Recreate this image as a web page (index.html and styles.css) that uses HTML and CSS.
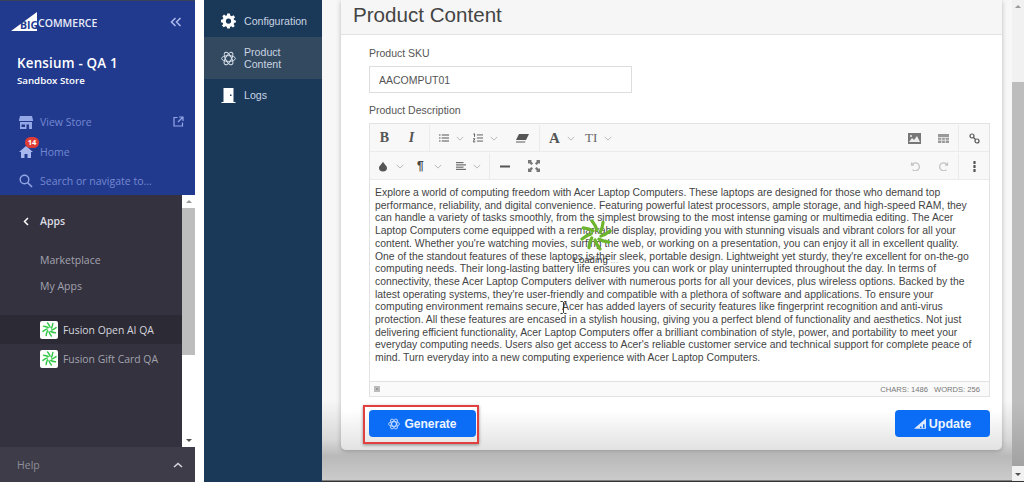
FILE: index.html
```html
<!DOCTYPE html>
<html lang="en">
<head>
  <meta charset="UTF-8" />
  <meta name="viewport" content="width=device-width, initial-scale=1.0"/>
  <title>Product Content</title>
  <link rel="stylesheet" href="styles.css">
</head>
<body>
  <svg class="defs" width="0" height="0">
    <symbol id="pinwheel" viewBox="0 0 32 32">
      <g fill="none" stroke-width="3.2" stroke-linecap="round">
        <path id="blade" d="M17 11 Q16 7 12 2"/>
        <path d="M17 11 Q16 7 12 2" transform="rotate(45 16 16)"/>
        <path d="M17 11 Q16 7 12 2" transform="rotate(90 16 16)"/>
        <path d="M17 11 Q16 7 12 2" transform="rotate(135 16 16)"/>
        <path d="M17 11 Q16 7 12 2" transform="rotate(180 16 16)"/>
        <path d="M17 11 Q16 7 12 2" transform="rotate(225 16 16)"/>
        <path d="M17 11 Q16 7 12 2" transform="rotate(270 16 16)"/>
        <path d="M17 11 Q16 7 12 2" transform="rotate(315 16 16)"/>
      </g>
    </symbol>
    <symbol id="knot" viewBox="0 0 24 24">
      <g fill="none" stroke="currentColor" stroke-width="1.6">
        <ellipse cx="12" cy="12" rx="11" ry="4.6"/>
        <ellipse cx="12" cy="12" rx="11" ry="4.6" transform="rotate(60 12 12)"/>
        <ellipse cx="12" cy="12" rx="11" ry="4.6" transform="rotate(120 12 12)"/>
      </g>
    </symbol>
    <symbol id="caret" viewBox="0 0 10 6">
      <path d="M1 1 L5 5 L9 1" fill="none" stroke="currentColor" stroke-width="1"/>
    </symbol>
  </svg>

  <aside class="sidebar">
    <div class="store">
      <div class="brand">
        <div class="logo">
          <svg class="logo-mark" width="27" height="19" viewBox="0 0 27 19"><path d="M0 19 L26 0 L26 19 Z" fill="#fff"/></svg>
          <span class="logo-big">BIG</span>
          <span class="logo-rest">COMMERCE</span>
        </div>
        <svg class="collapse" width="12" height="10" viewBox="0 0 12 10"><path d="M5.5 1 L1.5 5 L5.5 9 M10.5 1 L6.5 5 L10.5 9" fill="none" stroke="#a9b8ea" stroke-width="1.6"/></svg>
      </div>
      <div class="store-name">Kensium - QA 1</div>
      <div class="store-type">Sandbox Store</div>
      <ul class="store-links">
        <li>
          <svg width="14" height="13" viewBox="0 0 14 13"><path d="M1 0 H13 L14 4 V5 H0 V4 Z M1 6 H13 V13 H10 V8.5 H7.5 V13 H1 Z M2.5 8.5 V11 H6 V8.5 Z" fill="#93a6e6"/></svg>
          <span>View Store</span>
          <svg class="external" width="11" height="11" viewBox="0 0 11 11"><path d="M4.5 1.5 H1 V10 H9.5 V6.5 M6 1 H10 V5 M10 1 L5 6" fill="none" stroke="#93a6e6" stroke-width="1.2"/></svg>
        </li>
        <li>
          <svg width="14" height="13" viewBox="0 0 14 13"><path d="M7 1 L14 7 H12 V13 H8.5 V9 H5.5 V13 H2 V7 H0 Z" fill="#a8b8ee"/></svg>
          <span>Home</span>
          <b class="badge">14</b>
        </li>
        <li>
          <svg width="14" height="14" viewBox="0 0 14 14"><circle cx="5.5" cy="5.5" r="4.3" fill="none" stroke="#93a6e6" stroke-width="1.4"/><path d="M8.7 8.7 L13 13" stroke="#93a6e6" stroke-width="1.6"/></svg>
          <span>Search or navigate to...</span>
        </li>
      </ul>
    </div>

    <div class="apps">
      <div class="apps-list">
        <div class="apps-title">
          <svg width="6" height="9" viewBox="0 0 6 9"><path d="M5 1 L1.5 4.5 L5 8" fill="none" stroke="#fff" stroke-width="1.5"/></svg>
          <span>Apps</span>
        </div>
        <a class="apps-link">Marketplace</a>
        <a class="apps-link">My Apps</a>
        <div class="app-row current">
          <span class="app-icon"><svg width="15" height="15" class="green"><use href="#pinwheel"/></svg></span>
          <span>Fusion Open AI QA</span>
        </div>
        <div class="app-row">
          <span class="app-icon"><svg width="15" height="15" class="green"><use href="#pinwheel"/></svg></span>
          <span>Fusion Gift Card QA</span>
        </div>
      </div>
      <div class="side-scroll">
        <i class="arrow up"></i>
        <div class="side-thumb"></div>
        <i class="arrow down"></i>
      </div>
    </div>

    <div class="help">
      <span>Help</span>
      <svg width="10" height="6" viewBox="0 0 10 6"><path d="M1 5 L5 1.5 L9 5" fill="none" stroke="#d5d5dc" stroke-width="1.6"/></svg>
    </div>
  </aside>

  <nav class="app-nav">
    <ul>
      <li>
        <svg width="16" height="16" viewBox="0 0 16 16"><path fill-rule="evenodd" fill="#fff" d="M6.6 0 H9.4 L9.9 2.2 L11.4 2.9 L13.4 1.8 L15 3.9 L13.5 5.5 L14 7 L16 7.6 V9.4 L14 10 L13.5 11.4 L14.6 13.4 L12.8 15 L11 13.6 L9.8 14 L9.4 16 H6.6 L6.1 14 L4.7 13.5 L2.9 14.7 L1 12.9 L2.3 11.2 L1.9 9.9 L0 9.4 V6.6 L2 6.1 L2.5 4.7 L1.4 2.9 L3.2 1.1 L5 2.4 L6.2 2 Z M8 5.2 A2.8 2.8 0 1 0 8 10.8 A2.8 2.8 0 1 0 8 5.2 Z"/></svg>
        <span>Configuration</span>
      </li>
      <li class="active">
        <svg class="knot" width="15" height="15"><use href="#knot"/></svg>
        <span>Product<br>Content</span>
      </li>
      <li>
        <svg width="14" height="16" viewBox="0 0 14 16"><path fill-rule="evenodd" fill="#fff" d="M2 1 H12 V15 H14 V16 H0 V15 H2 Z M8.5 7.5 V9 H10 V7.5 Z"/></svg>
        <span>Logs</span>
      </li>
    </ul>
  </nav>

  <main class="page">
    <section class="card">
      <h1 class="card-title">Product Content</h1>
      <div class="card-body">
        <label class="field-label">Product SKU</label>
        <input class="sku" type="text" value="AACOMPUT01">
        <label class="field-label desc-label">Product Description</label>

        <div class="editor">
          <div class="toolbar">
            <div class="tb-group text-style">
              <span class="tb-btn serif-b">B</span>
              <span class="tb-btn serif-i">I</span>
            </div>
            <div class="tb-group lists">
              <span class="tb-drop">
                <svg width="13" height="10" viewBox="0 0 13 10"><path d="M0 1 H2 M0 5 H2 M0 9 H2 M3.5 1 H13 M3.5 5 H13 M3.5 9 H13" stroke="#555" stroke-width="1.4"/></svg>
                <svg class="caret" width="8" height="5"><use href="#caret"/></svg>
              </span>
              <span class="tb-drop">
                <svg width="13" height="12" viewBox="0 0 13 12"><path d="M0.5 1 L2 0.5 V4.5 M0 7 H2.5 L0 11 H3 M5 2 H13 M5 6 H13 M5 10 H13" stroke="#555" stroke-width="1.2" fill="none"/></svg>
                <svg class="caret" width="8" height="5"><use href="#caret"/></svg>
              </span>
              <span class="tb-btn eraser">
                <svg width="13" height="9" viewBox="0 0 13 9"><path d="M3 0 H13 L10 6 H0 Z" fill="#555"/><path d="M0 7 H9.5 L9 9 H0 Z" fill="#aaa"/></svg>
              </span>
            </div>
            <div class="tb-group bare">
              <span class="tb-drop">
                <span class="serif-b glyph">A</span>
                <svg class="caret" width="8" height="5"><use href="#caret"/></svg>
              </span>
              <span class="tb-drop font-size">
                <span class="glyph-ti">TI</span>
                <svg class="caret" width="8" height="5"><use href="#caret"/></svg>
              </span>
            </div>
            <div class="tb-right">
              <span class="tb-wide">
                <svg width="13" height="11" viewBox="0 0 13 11"><rect width="13" height="11" fill="#777"/><path d="M1 9 L4 5 L6 7 L9 3 L12 9 Z" fill="#eee"/><circle cx="3" cy="3" r="1" fill="#eee"/></svg>
              </span>
              <span class="tb-wide">
                <svg width="11" height="9" viewBox="0 0 11 9"><rect width="11" height="9" fill="#999"/><path d="M0 3.5 H11 M0 6.2 H11 M3.7 3 V9 M7.3 3 V9" stroke="#eee" stroke-width="0.8"/></svg>
              </span>
              <span class="tb-end">
                <svg width="11" height="11" viewBox="0 0 11 11"><circle cx="3" cy="3" r="2" fill="none" stroke="#555" stroke-width="1.2"/><circle cx="8" cy="8" r="2" fill="none" stroke="#555" stroke-width="1.2"/><path d="M4.5 4.5 L6.5 6.5" stroke="#555" stroke-width="1.2"/></svg>
              </span>
            </div>
          </div>

          <div class="toolbar">
            <div class="tb-group paragraph">
              <span class="tb-drop">
                <svg width="9" height="11" viewBox="0 0 9 11"><path d="M4.5 0 C5 2.5 9 4.5 9 7.2 A4.5 3.8 0 0 1 0 7.2 C0 4.5 4 2.5 4.5 0 Z" fill="#555"/></svg>
                <svg class="caret drop-caret" width="8" height="5"><use href="#caret"/></svg>
              </span>
              <span class="tb-drop para">
                <span class="glyph-para">¶</span>
                <svg class="caret" width="8" height="5"><use href="#caret"/></svg>
              </span>
              <span class="tb-drop align">
                <svg width="12" height="10" viewBox="0 0 12 10"><path d="M0 1 H9 M0 3.7 H12 M0 6.4 H9 M0 9 H12" stroke="#555" stroke-width="1.2"/></svg>
                <svg class="caret" width="8" height="5"><use href="#caret"/></svg>
              </span>
            </div>
            <div class="tb-group bare insert">
              <span class="tb-btn">
                <svg width="10" height="3" viewBox="0 0 10 3"><rect width="10" height="2" y="0.5" fill="#555"/></svg>
              </span>
              <span class="tb-btn">
                <svg width="12" height="12" viewBox="0 0 12 12"><path d="M0 0 H4 L3 1 L5 3.5 L3.5 5 L1 3 L0 4 Z M12 0 V4 L11 3 L8.5 5 L7 3.5 L9 1 L8 0 Z M0 12 V8 L1 9 L3.5 7 L5 8.5 L3 11 L4 12 Z M12 12 H8 L9 11 L7 8.5 L8.5 7 L11 9 L12 8 Z" fill="#777"/></svg>
              </span>
            </div>
            <div class="tb-right">
              <span class="tb-wide">
                <svg width="10" height="10" viewBox="0 0 10 10"><path d="M1.5 1.5 V4 H4 M2 3.6 A4 4 0 1 1 2.5 8.6" fill="none" stroke="#c4c4c4" stroke-width="1.3"/></svg>
              </span>
              <span class="tb-wide">
                <svg width="10" height="10" viewBox="0 0 10 10"><path d="M8.5 1.5 V4 H6 M8 3.6 A4 4 0 1 0 7.5 8.6" fill="none" stroke="#c4c4c4" stroke-width="1.3"/></svg>
              </span>
              <span class="tb-end">
                <svg width="3" height="11" viewBox="0 0 3 11"><path d="M1.5 0 V3 M1.5 4 V7 M1.5 8 V11" stroke="#555" stroke-width="2.2"/></svg>
              </span>
            </div>
          </div>

          <div class="editor-text">
            <p>Explore a world of computing freedom with Acer Laptop Computers. These laptops are designed for those who demand top performance, reliability, and digital convenience. Featuring powerful latest processors, ample storage, and high-speed RAM, they can handle a variety of tasks smoothly, from the simplest browsing to the most intense gaming or multimedia editing. The Acer Laptop Computers come equipped with a remarkable display, providing you with stunning visuals and vibrant colors for all your content. Whether you're watching movies, surfing the web, or working on a presentation, you can enjoy it all in excellent quality. One of the standout features of these laptops is their sleek, portable design. Lightweight yet sturdy, they're excellent for on-the-go computing needs. Their long-lasting battery life ensures you can work or play uninterrupted throughout the day. In terms of connectivity, these Acer Laptop Computers deliver with numerous ports for all your devices, plus wireless options. Backed by the latest operating systems, they're user-friendly and compatible with a plethora of software and applications. To ensure your computing environment remains secure, Acer has added layers of security features like fingerprint recognition and anti-virus protection. All these features are encased in a stylish housing, giving you a perfect blend of functionality and aesthetics. Not just delivering efficient functionality, Acer Laptop Computers offer a brilliant combination of style, power, and portability to meet your everyday computing needs. Users also get access to Acer's reliable customer service and technical support for complete peace of mind. Turn everyday into a new computing experience with Acer Laptop Computers.</p>
          </div>

          <div class="status">
            <span class="grip"></span>
            <span>CHARS: 1486</span>
            <span class="words">WORDS: 256</span>
          </div>
        </div>

        <div class="actions">
          <div class="highlight">
            <button class="btn generate">
              <svg class="knot" width="12" height="12"><use href="#knot"/></svg>
              Generate
            </button>
          </div>
          <button class="btn update">
            <svg width="12" height="11" viewBox="0 0 16 14"><path fill-rule="evenodd" fill="#dbe9ff" d="M0 14 L16 0 V14 Z M8 11 V13 H10 V11 Z M12 8 V13 H14 V8 Z"/></svg>
            Update
          </button>
        </div>
      </div>
    </section>

    <div class="page-scroll">
      <i class="arrow up"></i>
      <div class="page-thumb"></div>
      <i class="arrow down"></i>
    </div>

    <div class="loader">
      <svg width="32" height="32" class="lime"><use href="#pinwheel"/></svg>
      <span>Loading <em class="dots">...</em></span>
    </div>

    <svg class="text-cursor" width="7" height="13" viewBox="0 0 7 13"><path d="M0.5 0.5 H2.5 L3.5 1.5 L4.5 0.5 H6.5 M3.5 1.5 V11.5 M0.5 12.5 H2.5 L3.5 11.5 L4.5 12.5 H6.5" fill="none" stroke="#222" stroke-width="0.9"/></svg>
  </main>
</body>
</html>
```

FILE: styles.css
```css
* { box-sizing: border-box; }

html, body {
  height: 482px;
  overflow: hidden;
}

body {
  margin: 0;
  display: flex;
  background-color: #fff;
  font-family: "Liberation Sans", Arial, sans-serif;
}

.defs {
  position: absolute;
}

ul {
  list-style-type: none;
  margin: 0;
  padding: 0;
}

.green { stroke: #35c94a; }
.lime { stroke: #6cb52d; }

/* left bigcommerce sidebar */
.sidebar {
  width: 195px;
  height: 482px;
  display: flex;
  flex-direction: column;
  font-family: "Open Sans", sans-serif;
}

.store {
  height: 195px;
  background-color: #223a8e;
  border-top: 1px solid #3b4258;
  padding: 11px 0 0 17px;
  color: white;
}

.brand {
  display: flex;
  align-items: center;
  justify-content: space-between;
  height: 19px;
  padding-right: 13px;
}

.logo {
  position: relative;
  display: flex;
  align-items: center;
  margin-left: -6px;
  padding-left: 27px;
  height: 19px;
}

.logo-mark {
  position: absolute;
  left: 0;
  top: 0;
}

.logo-big {
  position: absolute;
  left: 9px;
  top: 6px;
  font-size: 10.5px;
  line-height: 14px;
  font-weight: 700;
  color: #223a8e;
}

.logo-rest {
  font-size: 10.5px;
  line-height: 19px;
  margin-top: 3px;
  color: #e8ebf6;
  font-weight: 600;
}

.store-name {
  margin-top: 22px;
  font-size: 13.4px;
  line-height: 20px;
  font-weight: 600;
  letter-spacing: 0.2px;
}

.store-type {
  margin-top: 0;
  font-size: 9.7px;
  line-height: 16px;
  font-weight: 600;
}

.store-links {
  margin-top: 18.4px;
  margin-left: 2px;
}

.store-links li {
  position: relative;
  display: flex;
  align-items: center;
  height: 29.5px;
  gap: 7px;
  color: #7488d2;
  font-size: 10.5px;
}

.external {
  position: absolute;
  left: 154px;
  top: 9px;
}

.badge {
  position: absolute;
  left: 6px;
  top: 0;
  width: 14px;
  height: 11px;
  border-radius: 6px;
  background-color: #e03c36;
  color: white;
  font-size: 7.5px;
  line-height: 11px;
  text-align: center;
}

.apps {
  flex-grow: 1;
  display: flex;
  background-color: #34323e;
}

.apps-list {
  flex-grow: 1;
}

.apps-title {
  display: flex;
  align-items: center;
  height: 26px;
  margin-top: 13px;
  padding-left: 23px;
  gap: 11px;
  color: #dcdce2;
  font-size: 10.5px;
  font-weight: 600;
}

.apps-link {
  display: block;
  height: 26px;
  padding-left: 40px;
  line-height: 26px;
  color: #a3a3b0;
  font-size: 10.5px;
}

.apps-title + .apps-link {
  margin-top: 13px;
}

.app-row {
  display: flex;
  align-items: center;
  height: 29px;
  padding-left: 40px;
  gap: 5px;
  color: #a3a3b0;
  font-size: 10.4px;
}

.apps-link + .app-row {
  margin-top: 16px;
}

.app-row.current {
  background-color: #2c2a35;
  color: #d6d6de;
}

.app-icon {
  display: flex;
  align-items: center;
  justify-content: center;
  width: 18px;
  height: 18px;
  border-radius: 2px;
  background-color: #fff;
}

.side-scroll {
  position: relative;
  width: 13px;
  background-color: #fff;
}

.side-thumb {
  position: absolute;
  top: 13px;
  left: 0;
  right: 0;
  height: 147px;
  background-color: #bdbdbd;
}

.arrow {
  position: absolute;
  left: 50%;
  margin-left: -3px;
  border-left: 3px solid transparent;
  border-right: 3px solid transparent;
}

.arrow.up {
  top: 5px;
  border-bottom: 3px solid #9a9a9a;
}

.arrow.down {
  bottom: 5px;
  border-top: 3px solid #505050;
}

.help {
  display: flex;
  align-items: center;
  justify-content: space-between;
  height: 35px;
  padding: 0 12px 0 17px;
  background-color: #3e3c48;
  color: #8f8f9c;
  font-size: 10.5px;
}

/* app navigation */
.app-nav {
  width: 118px;
  height: 482px;
  margin-left: 9px;
  padding-top: 5px;
  background-color: #1a3858;
  font-size: 10.6px;
  line-height: 12px;
  color: #c9d4e2;
}

.app-nav li {
  display: flex;
  align-items: center;
  min-height: 32px;
  padding-left: 17px;
  gap: 8px;
}

.app-nav li svg {
  flex-shrink: 0;
  width: 15px;
}

.app-nav li.active {
  min-height: 42px;
  background-color: #33495f;
}

.knot {
  color: #d9e2ec;
}

/* main page */
.page {
  position: relative;
  flex-grow: 1;
  display: flex;
  height: 482px;
  padding-left: 19px;
  background: linear-gradient(to bottom, #f7f7f7 0, #f7f7f7 400px, #d8d8d8 440px, #b9b9b9 456px, #cbcbcb 480px, #333 481px);
}

.card {
  width: 661px;
  height: 450px;
  background: linear-gradient(to bottom, #fff 0, #fff 410px, #e2e2e2 450px);
  border-radius: 0 0 5px 5px;
  box-shadow: 0 1px 5px rgba(0,0,0,0.25);
}

.card-title {
  height: 35px;
  margin: 0;
  padding-left: 12px;
  background-color: #f6f6f6;
  border-bottom: 1px solid #e3e3e3;
  font-size: 20.6px;
  font-weight: 400;
  line-height: 30px;
  color: #444;
}

.card-body {
  padding: 11px 12px 0 28px;
}

.field-label {
  display: block;
  font-size: 10.5px;
  line-height: 14px;
  color: #555;
}

.sku {
  display: block;
  width: 263px;
  height: 27px;
  margin-top: 6px;
  padding: 0 9px;
  border: 1px solid #ddd;
  background-color: #fff;
  font-family: inherit;
  font-size: 10.5px;
  color: #555;
}

.desc-label {
  margin-top: 10px;
}

.editor {
  margin-top: 6px;
  border: 1px solid #e2e2e2;
  height: 274px;
  display: flex;
  flex-direction: column;
}

.toolbar {
  display: flex;
  height: 28px;
  padding-top: 1px;
  flex-shrink: 0;
  background-color: #f8f8f8;
  border-bottom: 1px solid #ebebeb;
  color: #555;
}

.tb-group {
  display: flex;
  align-items: center;
  border-right: 1px solid #ebebeb;
}

.tb-group.bare {
  border-right: 0;
}

.tb-group.text-style {
  padding: 0 4px 0 1px;
}

.tb-group.lists {
  padding-right: 3.5px;
}

.tb-group.paragraph {
  padding-right: 8px;
}

.tb-group.insert {
  padding-left: 1px;
  gap: 2px;
}

.tb-btn {
  display: flex;
  align-items: center;
  justify-content: center;
  width: 27px;
}

.tb-btn.eraser {
  margin-left: 10.5px;
}

.serif-b {
  font-family: "Liberation Serif", serif;
  font-weight: 700;
  font-size: 14px;
}

.serif-i {
  font-family: "Liberation Serif", serif;
  font-style: italic;
  font-weight: 700;
  font-size: 14px;
}

.tb-drop {
  display: flex;
  align-items: center;
  width: 34px;
  padding-left: 9px;
}

.tb-drop .caret {
  margin-left: 7px;
  flex-shrink: 0;
  color: #aaa;
}

.tb-drop .drop-caret {
  margin-left: 9px;
}

.tb-drop.font-size {
  margin-left: 2px;
}

.tb-drop.para {
  margin-left: 4px;
}

.tb-drop.align {
  margin-left: 5px;
}

.glyph {
  width: 13px;
  font-size: 15px;
  text-align: center;
}

.glyph-ti {
  width: 16px;
  font-family: "Liberation Serif", serif;
  font-size: 13px;
  color: #666;
}

.glyph-para {
  width: 10px;
  font-size: 12px;
  font-weight: 700;
  color: #444;
}

.tb-right {
  display: flex;
  align-items: center;
  margin-left: auto;
}

.tb-wide {
  display: flex;
  align-items: center;
  justify-content: center;
  width: 29px;
}

.tb-end {
  display: flex;
  align-items: center;
  justify-content: center;
  width: 31px;
  height: 26px;
  border-left: 1px solid #ebebeb;
}

.editor-text {
  flex-grow: 1;
  padding: 7px 9px 0 5px;
  background-color: #fff;
  font-size: 10.4px;
  line-height: 12.7px;
  color: #444;
}

.editor-text p {
  margin: 0;
}

.status {
  display: flex;
  align-items: center;
  justify-content: flex-end;
  flex-shrink: 0;
  height: 15px;
  padding: 0 9px 0 4px;
  gap: 6px;
  background-color: #fafafa;
  border-top: 1px solid #e2e2e2;
  font-size: 7.6px;
  color: #777;
}

.grip {
  width: 6px;
  height: 6px;
  margin-right: auto;
  background-color: #999;
  border: 2px solid #bbb;
}

.actions {
  display: flex;
  align-items: flex-start;
  justify-content: space-between;
  margin: 8px 0 0 -6px;
}

.highlight {
  display: flex;
  width: 116px;
  height: 39px;
  padding: 3px 1px 0 4px;
  border: 2px solid #e2403f;
  box-shadow: 0 1px 3px rgba(0,0,0,0.4);
}

.btn {
  display: flex;
  align-items: center;
  justify-content: center;
  gap: 4px;
  height: 27px;
  border: 0;
  border-radius: 4px;
  background-color: #0b6df6;
  color: #eef5ff;
  font-family: "Liberation Sans", Arial, sans-serif;
  font-size: 12px;
  font-weight: 700;
  cursor: pointer;
}

.generate {
  width: 107px;
}

.generate .knot {
  color: #dbe9ff;
}

.update {
  width: 95px;
  margin-top: 5px;
  font-size: 12.5px;
  gap: 3px;
}

.page-scroll {
  position: absolute;
  right: 0;
  top: 0;
  bottom: 1px;
  width: 12px;
  background-color: #f1f1f1;
}

.page-thumb {
  position: absolute;
  top: 82px;
  left: 0;
  right: 0;
  height: 384px;
  background: linear-gradient(to bottom, #bdbdbd 0, #bdbdbd 320px, #a2a2a2 384px);
}

/* loading overlay and mouse cursor */
.loader {
  position: absolute;
  left: 254px;
  top: 219px;
  width: 40px;
  display: flex;
  flex-direction: column;
  align-items: center;
  font-size: 9.6px;
  line-height: 12px;
  color: #333;
}

.loader span {
  margin-top: 3px;
  white-space: nowrap;
}

.dots {
  font-style: normal;
  color: #bbb;
}

.text-cursor {
  position: absolute;
  left: 238px;
  top: 301px;
}
```
